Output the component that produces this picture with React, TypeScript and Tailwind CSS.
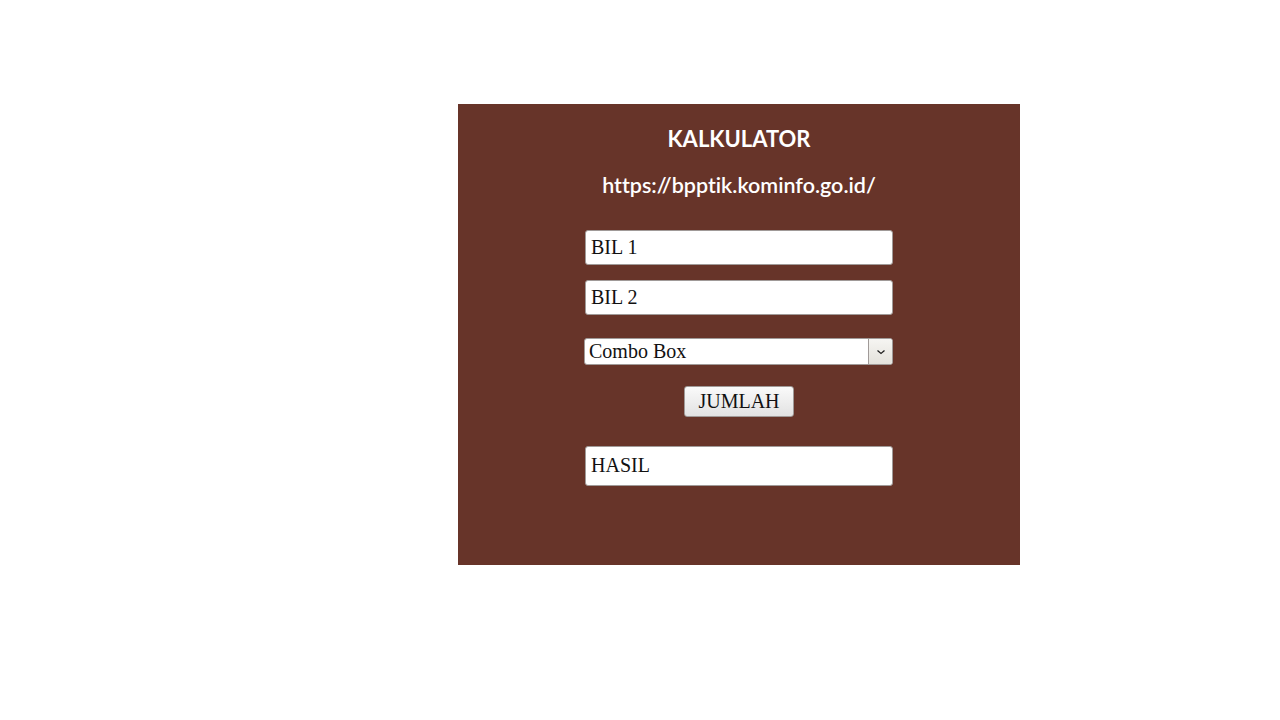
export default function App() {
  return (
    <div className="min-h-screen bg-white pt-[104px] pl-[458px]">
      <div className="flex h-[461px] w-[562px] flex-col items-center bg-[#673429]">
        <h1 className="mt-[21px] font-['Lato',sans-serif] text-[22px] font-bold leading-[28px] text-white">
          KALKULATOR
        </h1>
        <p className="mt-[19px] font-['Lato',sans-serif] text-[21.5px] font-semibold leading-[26px] text-white [font-variant-ligatures:none]">
          https://bpptik.kominfo.go.id/
        </p>
        <div className="mt-[32px] flex h-[35px] w-[308px] items-center rounded-[3px] border border-[#a09a98] bg-white pb-[2px] pl-[5px] font-['Liberation_Serif',serif] text-[20px] text-[#111]">
          BIL 1
        </div>
        <div className="mt-[15px] flex h-[35px] w-[308px] items-center rounded-[3px] border border-[#a09a98] bg-white pb-[2px] pl-[5px] font-['Liberation_Serif',serif] text-[20px] text-[#111]">
          BIL 2
        </div>
        <div className="mt-[23px] mr-[1px] flex h-[27px] w-[309px] overflow-hidden rounded-[3px] border border-[#a09a98] bg-white font-['Liberation_Serif',serif] text-[20px] text-[#111]">
          <div className="flex flex-1 items-center pb-[2px] pl-[4px]">Combo Box</div>
          <div className="flex w-[24px] items-center justify-center border-l border-[#a09a98] bg-gradient-to-b from-[#f6f5f2] to-[#e4e2dc]">
            <svg width="10" height="6" viewBox="0 0 10 6" fill="none">
              <path d="M1.5 1.5 L5 4.5 L8.5 1.5" stroke="#222" strokeWidth="1.3" />
            </svg>
          </div>
        </div>
        <button className="mt-[21px] flex h-[31px] w-[110px] items-center justify-center rounded-[3px] border border-[#a09a98] bg-gradient-to-b from-[#fafafa] to-[#e2e2e2] pb-[1px] font-['Liberation_Serif',serif] text-[20px] text-[#111]">
          JUMLAH
        </button>
        <div className="mt-[29px] flex h-[40px] w-[308px] items-center rounded-[3px] border border-[#a09a98] bg-white pb-[2px] pl-[5px] font-['Liberation_Serif',serif] text-[20px] text-[#111]">
          HASIL
        </div>
      </div>
    </div>
  );
}
